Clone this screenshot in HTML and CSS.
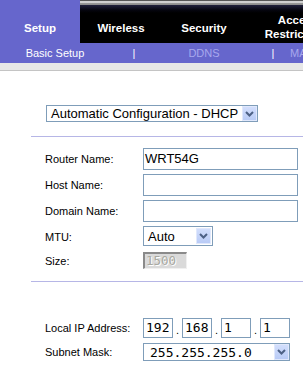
FILE: index.html
```html
<!DOCTYPE html>
<html>
<head>
<meta charset="utf-8">
<link rel="stylesheet" href="styles.css">
</head>
<body>
<div class="page">
  <div class="tabs">
    <div class="tab tab-active">Setup</div>
    <div class="tab-band">
      <div class="tab tab-wireless">Wireless</div>
      <div class="tab tab-security">Security</div>
      <div class="tab tab-access">Access<br>Restrictions</div>
    </div>
  </div>
  <div class="subnav">
    <span class="sub sub-current">Basic Setup</span>
    <span class="sep">|</span>
    <span class="sub">DDNS</span>
    <span class="sep">|</span>
    <span class="sub sub-last">MAC Address Clone</span>
  </div>
  <div class="strip"></div>
  <main class="content">
    <div class="select select-conn">
      <span class="select-text">Automatic Configuration - DHCP</span>
      <span class="arrow"><svg width="9" height="6" viewBox="0 0 9 6"><polyline points="1,1 4.5,4.5 8,1" fill="none" stroke="#4d6185" stroke-width="2"/></svg></span>
    </div>
    <div class="rule rule-first"></div>
    <div class="form">
      <span class="label">Router Name:</span>
      <div class="textbox">WRT54G</div>
      <span class="label">Host Name:</span>
      <div class="textbox"></div>
      <span class="label">Domain Name:</span>
      <div class="textbox"></div>
      <span class="label">MTU:</span>
      <div class="select select-mtu">
        <span class="select-text">Auto</span>
        <span class="arrow"><svg width="9" height="6" viewBox="0 0 9 6"><polyline points="1,1 4.5,4.5 8,1" fill="none" stroke="#4d6185" stroke-width="2"/></svg></span>
      </div>
      <span class="label">Size:</span>
      <div class="disabled-box">1500</div>
    </div>
    <div class="rule rule-second"></div>
    <div class="form form-net">
      <span class="label">Local IP Address:</span>
      <div class="ip">
        <div class="ipbox">192</div><span class="dot">.</span>
        <div class="ipbox">168</div><span class="dot">.</span>
        <div class="ipbox">1</div><span class="dot">.</span>
        <div class="ipbox">1</div>
      </div>
      <span class="label">Subnet Mask:</span>
      <div class="select select-mask">
        <span class="select-text mono">255.255.255.0</span>
        <span class="arrow"><svg width="9" height="6" viewBox="0 0 9 6"><polyline points="1,1 4.5,4.5 8,1" fill="none" stroke="#4d6185" stroke-width="2"/></svg></span>
      </div>
    </div>
  </main>
</div>
</body>
</html>
```
FILE: styles.css
```css
* { box-sizing: border-box; }
html, body { margin: 0; padding: 0; background: #fff; }
body { font-family: "Liberation Sans", Arial, sans-serif; color: #000; }
.page { width: 303px; height: 370px; overflow: hidden; }

.tabs { display: flex; height: 43px; }
.tab {
  display: flex; align-items: center; justify-content: center; text-align: center;
  color: #fff; font-weight: bold; font-size: 11.5px; line-height: 14px;
  padding-top: 12px; flex-shrink: 0;
}
.tab-active { width: 80px; background: #6666cc; }
.tab-band {
  flex: 1; display: flex; overflow: hidden;
  background: linear-gradient(to bottom, #555 0px, #555 1px, #d0d0d0 1px, #cfcfcf 3px, #9a9a9a 3px, #8a8a8a 5px, #20203c 5px, #05050f 10px, #000 13px);
}
.tab-wireless { width: 82px; }
.tab-security { width: 84px; }
.tab-access { width: 104px; padding-top: 10px; }

.subnav {
  height: 20px; background: #6666cc;
  display: grid; grid-template-columns: 110px 48px 92px 46px 1fr;
  align-items: center; font-size: 11px; white-space: nowrap; overflow: hidden;
}
.sub { text-align: center; color: #a8a8ec; }
.sub-current { color: #fff; }
.sep { text-align: center; color: #fff; }
.sub-last { text-align: left; margin-left: -6px; }

.strip { height: 8px; background: #e7e7e7; border-bottom: 1px solid #c4c4c4; }

.content { padding-top: 34px; }

.select {
  display: flex; align-items: stretch;
  border: 1px solid #7f9db9; background: #fff;
  font-size: 13px; line-height: 15px;
}
.select-text { flex: 1; padding-left: 4px; white-space: nowrap; overflow: hidden; display: flex; align-items: center; }
.arrow {
  width: 15px; flex-shrink: 0;
  display: flex; align-items: center; justify-content: center;
  background: linear-gradient(to bottom, #d2defc, #b9cbf6);
  border: 1px solid #e0e8fc;
}
.select-conn { margin-left: 46px; width: 212px; height: 17px; }
.select-mtu { width: 70px; height: 20px; align-self: start; }
.select-mtu .arrow { margin: 1px 1px 1px 0; }
.select-mask { width: 147px; height: 18px; }
.select-mask .select-text { padding-left: 6px; }

.rule { height: 1px; background: #b6b6e6; margin-left: 31px; }
.rule-first { margin-top: 14px; }
.rule-second { margin-top: 12px; }

.form {
  margin: 11px 0 0 45px;
  display: grid; grid-template-columns: 98px auto;
  grid-template-rows: repeat(4, 22px) 17px; row-gap: 4px;
  align-items: center;
}
.label { font-size: 11px; white-space: nowrap; }
.textbox {
  width: 155px; height: 22px; border: 1px solid #7f9db9; background: #fff;
  font-size: 13px; line-height: 20px; padding-left: 1px;
}
.disabled-box {
  width: 44px; height: 17px; align-self: start;
  background: #dadada;
  border-top: 2px solid #8a8a8a; border-left: 2px solid #8a8a8a;
  border-right: 1px solid #f0f0f0; border-bottom: 1px solid #f0f0f0;
  font-family: "DejaVu Sans Mono", monospace; font-size: 12.5px; line-height: 14px;
  color: #a8a8a0; text-shadow: 1px 1px 0 #fff; padding-left: 1px;
}

.form-net { margin-top: 36px; grid-template-rows: 20px 18px; row-gap: 5px; }
.ip { display: flex; align-items: center; }
.ipbox {
  width: 30px; height: 20px; border: 1px solid #7f9db9;
  font-family: "DejaVu Sans Mono", monospace; font-size: 13px; line-height: 18px;
  padding-left: 2px;
}
.dot { width: 9px; text-align: center; font-size: 11px; line-height: 20px; padding-top: 3px; }
.mono { font-family: "DejaVu Sans Mono", monospace; }
```
